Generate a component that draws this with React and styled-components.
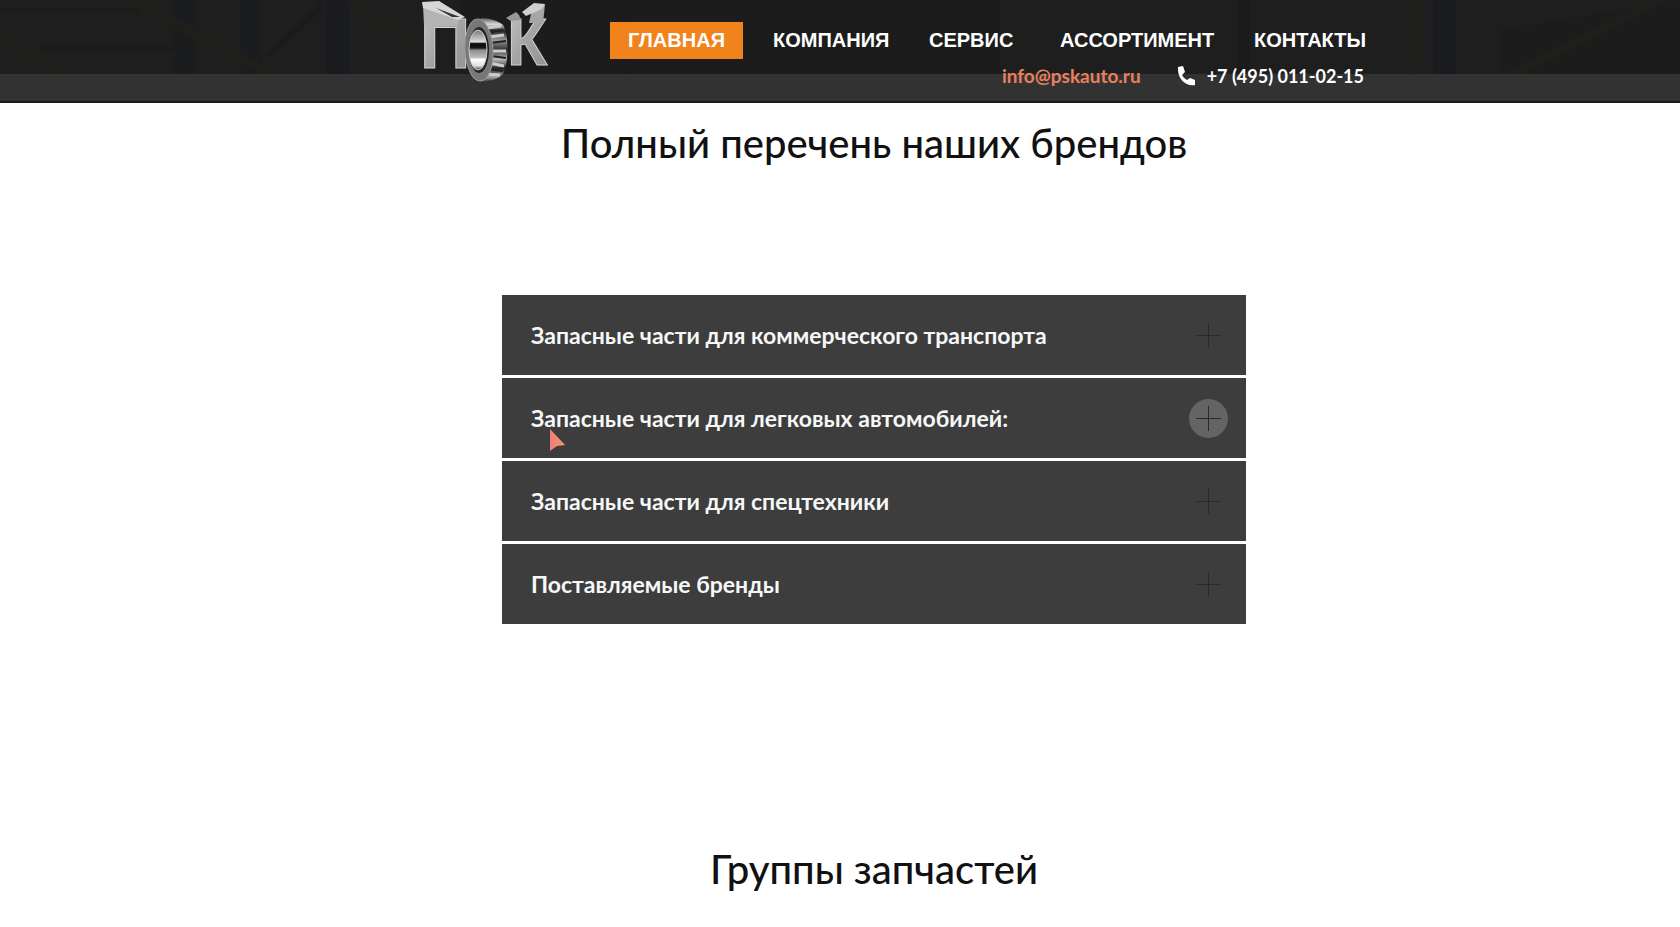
import React, { useState } from 'react';
import styled, { createGlobalStyle } from 'styled-components';

const GlobalStyle = createGlobalStyle`
  *, *::before, *::after { box-sizing: border-box; }
  body {
    margin: 0;
    background: #fff;
    color: #111;
    font-family: Lato, 'Open Sans', sans-serif;
    overflow-x: hidden;
  }
`;

const Header = styled.header`
  position: relative;
  display: flex;
  justify-content: center;
  padding-left: 104px;
  background: #323232;
  border-bottom: 2px solid #191919;
`;

const Backdrop = styled.svg`
  position: absolute;
  top: 0;
  left: 0;
  width: 100%;
  height: 74px;
`;

const HeaderInner = styled.div`
  position: relative;
  display: flex;
  align-items: flex-start;
  gap: 56px;
  height: 101px;
`;

const LogoLink = styled.a`
  display: block;
  line-height: 0;
`;

const Menu = styled.div`
  display: flex;
  flex-direction: column;
  gap: 4px;
  padding-top: 22px;
`;

const Nav = styled.nav`
  display: grid;
  grid-template-columns: 145px 156px 131px 194px 128px;
  justify-items: start;
`;

const NavLink = styled.a`
  padding: 0 18px;
  background: ${({ $active }) => ($active ? '#f0831c' : 'transparent')};
  color: #fff;
  font: bold 20px/37px 'Liberation Sans', Arial, sans-serif;
  text-decoration: none;
  white-space: nowrap;
`;

const Contacts = styled.div`
  display: flex;
  justify-content: flex-end;
  align-items: center;
  gap: 36px;
  font-weight: 700;
  line-height: 26px;
`;

const ContactLink = styled.a`
  display: flex;
  align-items: center;
  gap: 12px;
  color: ${({ $accent }) => ($accent ? '#e8805f' : '#fff')};
  font-size: ${({ $accent }) => ($accent ? '19px' : '18px')};
  text-decoration: none;
`;

const Main = styled.main`
  display: flex;
  flex-direction: column;
  align-items: center;
  padding: 15px 0 28px 68px;
`;

const Title = styled.h2`
  margin: 0;
  font-size: 40px;
  font-weight: 500;
  line-height: 50px;
  text-align: center;
`;

const Accordion = styled.div`
  display: flex;
  flex-direction: column;
  gap: 3px;
  width: 100%;
  max-width: 744px;
  margin: 127px 0 220px;
`;

const Item = styled.div`
  position: relative;
`;

const ItemButton = styled.button`
  display: flex;
  align-items: center;
  justify-content: space-between;
  width: 100%;
  height: 80px;
  padding: 0 18px 0 29px;
  border: 0;
  background: #3c3d3c;
  color: #f7f7f7;
  font: 700 23px/30px Lato, 'Open Sans', sans-serif;
  text-align: left;
  cursor: pointer;
`;

const PlusBadge = styled.span`
  display: grid;
  place-items: center;
  width: 39px;
  height: 39px;
  border-radius: 50%;
  background: ${({ $hover }) => ($hover ? '#636463' : 'transparent')};
`;

const Pointer = styled.svg`
  position: absolute;
  left: 47px;
  top: 51px;
  pointer-events: none;
`;

const MENU = ['ГЛАВНАЯ', 'КОМПАНИЯ', 'СЕРВИС', 'АССОРТИМЕНТ', 'КОНТАКТЫ'];

const GROUPS = [
  'Запасные части для коммерческого транспорта',
  'Запасные части для легковых автомобилей:',
  'Запасные части для спецтехники',
  'Поставляемые бренды',
];

function WarehouseBackdrop() {
  return (
    <Backdrop viewBox="0 0 1680 74" preserveAspectRatio="none" aria-hidden="true">
      <rect width="1680" height="74" fill="#1e1e1e" />
      <path d="M460 0H1000V74H460zM1500 30L1680 0V74H1500z" fill="#1c1c1c" />
      <path d="M0 8H140V12H0zM40 46H172V51H40z" fill="#1a1b1b" />
      <path d="M172 0H197V74H172zM240 0H262V74H240z" fill="#1b1c1d" />
      <path d="M326 0H349V74H326zM1433 0H1456V74H1433z" fill="#191b1f" />
      <path d="M620 0H632V74H620zM1238 0H1250V74H1238z" fill="#1b1b1e" />
      <path d="M322 6L268 56" stroke="#191b1c" strokeWidth="6" />
      <path d="M120 -6L275 76M-5 40L80 76M350 -4L430 60M1510 76L1665 -4" fill="none" stroke="#201e1a" strokeWidth="10" />
      <path d="M1408 0H1416V74H1408z" fill="#201f1b" />
    </Backdrop>
  );
}

function Logo() {
  return (
    <svg width="134" height="84" viewBox="0 0 134 84" role="img" aria-label="ПСК">
      <defs>
        <linearGradient id="steel" x1="0" y1="0" x2="1" y2="1">
          <stop offset="0" stopColor="#c4c4c4" />
          <stop offset="0.5" stopColor="#a3a3a3" />
          <stop offset="1" stopColor="#8f8f8f" />
        </linearGradient>
        <linearGradient id="bore" x1="0" y1="0" x2="0" y2="1">
          <stop offset="0" stopColor="#777" />
          <stop offset="0.3" stopColor="#dcdcdc" />
          <stop offset="0.34" stopColor="#0a0a0a" />
          <stop offset="0.45" stopColor="#161616" />
          <stop offset="0.5" stopColor="#8b8b8b" />
          <stop offset="0.68" stopColor="#bbb" />
          <stop offset="0.74" stopColor="#fff" />
          <stop offset="0.9" stopColor="#ddd" />
          <stop offset="1" stopColor="#333" />
        </linearGradient>
        <linearGradient id="shell" x1="0" y1="0" x2="0" y2="1">
          <stop offset="0" stopColor="#555" />
          <stop offset="0.1" stopColor="#ddd" />
          <stop offset="0.2" stopColor="#222" />
          <stop offset="0.35" stopColor="#999" />
          <stop offset="0.5" stopColor="#333" />
          <stop offset="0.65" stopColor="#bbb" />
          <stop offset="0.8" stopColor="#222" />
          <stop offset="0.93" stopColor="#aaa" />
          <stop offset="1" stopColor="#444" />
        </linearGradient>
      </defs>
      <g fontFamily="'Liberation Sans Narrow', 'Liberation Sans', sans-serif" fontWeight="700">
        <text x="0" y="68" fontSize="70" fill="url(#steel)" stroke="#d0d0d0" strokeWidth="1">П</text>
        <text x="87" y="65" fontSize="66" fill="url(#steel)" stroke="#d0d0d0" strokeWidth="1">К</text>
      </g>
      <path d="M3 5L38 18V26L4 25z" fill="#b4b4b4" />
      <path d="M2 2L19 1L45 17L38 20L3 8z" fill="#d6d6d6" />
      <path d="M16 8L40 17L32 17z" fill="#333" />
      <path d="M86 18L96 12L99 15L101 20L91 21z" fill="#999" />
      <path d="M112 9L125 4L124 14L123 23L109 23z" fill="#a6a6a6" />
      <path d="M102 12L114 3L125 4L122 9L106 16z" fill="#cfcfcf" />
      <path d="M61 18C70 18 78 21 83 25C89 34 89 62 83 74C77 80 68 82 60 81z" fill="url(#shell)" />
      <g stroke="#ccc" strokeWidth="3">
        <path d="M67 28L81 26M69 37L84 35M71 51L86 51M69 63L84 66M65 74L80 75" />
      </g>
      <g stroke="#222" strokeWidth="2">
        <path d="M66 33L83 30M70 43L86 41M71 56L86 58M67 69L83 71" />
      </g>
      <ellipse cx="59" cy="50" rx="14" ry="31" fill="#777" stroke="#999" strokeWidth="1" transform="rotate(-3 59 50)" />
      <ellipse cx="59" cy="50" rx="10" ry="23" fill="#222" />
      <ellipse cx="58" cy="50" rx="9" ry="20" fill="url(#bore)" stroke="#ccc" strokeWidth="1" />
    </svg>
  );
}

function PhoneIcon() {
  return (
    <svg width="18" height="20" viewBox="0 0 18 20" aria-hidden="true">
      <path d="M1 1L6 0L8 6L5 9C6 11 8 13 10 14L13 12L18 14V19C9 21 0 13 1 1z" fill="#fff" />
    </svg>
  );
}

function PlusIcon() {
  return (
    <svg width="25" height="25" viewBox="0 0 25 25" aria-hidden="true">
      <path d="M12.5 0V25M0 12.5H25" stroke="#292a29" strokeWidth="1" />
    </svg>
  );
}

export default function App() {
  const [hovered, setHovered] = useState(1);
  return (
    <>
      <GlobalStyle />
      <Header>
        <WarehouseBackdrop />
        <HeaderInner>
          <LogoLink href="#home"><Logo /></LogoLink>
          <Menu>
            <Nav>
              {MENU.map((label, i) => (
                <NavLink key={label} href={`#section-${i}`} $active={i === 0}>{label}</NavLink>
              ))}
            </Nav>
            <Contacts>
              <ContactLink href="mailto:info@pskauto.ru" $accent>info@pskauto.ru</ContactLink>
              <ContactLink href="tel:+74950110215"><PhoneIcon />+7 (495) 011-02-15</ContactLink>
            </Contacts>
          </Menu>
        </HeaderInner>
      </Header>
      <Main>
        <Title>Полный перечень наших брендов</Title>
        <Accordion>
          {GROUPS.map((label, i) => (
            <Item key={label} onMouseEnter={() => setHovered(i)}>
              <ItemButton type="button" aria-expanded="false">
                {label}
                <PlusBadge $hover={hovered === i}><PlusIcon /></PlusBadge>
              </ItemButton>
              {i === 1 && (
                <Pointer width="17" height="23" viewBox="0 0 17 23" aria-hidden="true">
                  <defs>
                    <linearGradient id="pointer" x1="0" y1="0" x2="1" y2="0">
                      <stop offset="0" stopColor="#ee7b80" />
                      <stop offset="1" stopColor="#fd9a5c" />
                    </linearGradient>
                  </defs>
                  <path d="M1 0L16 16L8 17L1 22z" fill="url(#pointer)" />
                </Pointer>
              )}
            </Item>
          ))}
        </Accordion>
        <Title>Группы запчастей</Title>
      </Main>
    </>
  );
}
